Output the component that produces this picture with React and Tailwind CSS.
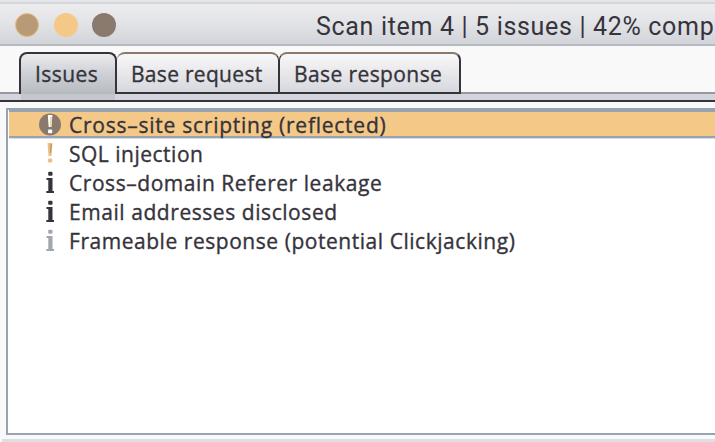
const ISSUES = [
  { icon: 'high', name: 'Cross–site scripting (reflected)', tracking: 'tracking-[0.75px]', selected: true },
  { icon: 'medium', name: 'SQL injection', tracking: 'tracking-[0.5px]' },
  { icon: 'info', name: 'Cross–domain Referer leakage', tracking: 'tracking-[0.55px]' },
  { icon: 'info', name: 'Email addresses disclosed', tracking: 'tracking-[0.56px]' },
  { icon: 'faint', name: 'Frameable response (potential Clickjacking)', tracking: 'tracking-[0.54px]' },
];

function InfoGlyph({ color }) {
  return (
    <svg width="24" height="24" viewBox="0 0 24 24" fill={color}>
      <rect x="10.200" y="1.800" width="4.300" height="4" rx="1" />
      <path d="M8.500 8h6v13h1.500v2H8.300v-2h2V10H8.500z" />
    </svg>
  );
}

function SeverityIcon({ kind }) {
  if (kind === 'high') {
    return (
      <svg width="24" height="24" viewBox="0 0 24 24">
        <circle cx="12" cy="12.500" r="11" fill="#8a7a6d" />
        <path d="M9.800 3h4.600l-.9 12h-2.800z" fill="#fff" />
        <path d="M12.200 5h1.600l-.6 10h-1z" fill="#f4c987" />
        <rect x="10" y="17.500" width="4.200" height="3.800" rx="1" fill="#fff" />
      </svg>
    );
  }
  if (kind === 'medium') {
    return (
      <svg width="24" height="24" viewBox="0 0 24 24" fill="#eebf7e">
        <path d="M9.500 2h5l-1 13h-3z" />
        <path d="M12.500 3h1.400l-1.100 9h-.8z" fill="#a9927a" />
        <rect x="9.800" y="17.500" width="4.600" height="4" rx="1.500" />
      </svg>
    );
  }
  return <InfoGlyph color={kind === 'info' ? '#36333b' : '#a2a7af'} />;
}

function IssueRow({ issue }) {
  return (
    <div
      className={
        'ml-px flex items-center pl-[29px] ' +
        (issue.selected
          ? 'h-[28px] border-b-2 border-[#98a3b1] bg-[#f4c987] shadow-[inset_0_2px_#98a3b1,0_1px_#d9dde3]'
          : 'h-[29px]')
      }
    >
      <span className="mr-[7px] flex w-6 shrink-0 pt-px">
        <SeverityIcon kind={issue.icon} />
      </span>
      <span className={'whitespace-pre pt-[4px] ' + issue.tracking}>{issue.name}</span>
    </div>
  );
}

function Tab({ label, width, active, last, tracking }) {
  return (
    <div
      className={
        'flex h-[42px] shrink-0 items-center rounded-t-[8px] border-t-2 pl-[14px] ' +
        width + ' ' +
        (active
          ? 'border-x-2 border-[#36333b] bg-linear-to-b from-[#ebebed] via-[#cdd0d6] to-[#b7babd]'
          : 'border-b-2 border-[#36333b] border-t-[#8a7a6d] bg-linear-to-b from-[#f8f8f8] via-[#e8e8eb] to-[#d6d8de] ' +
            (last ? 'border-l border-r-2' : 'border-r'))
      }
    >
      <span className={'whitespace-pre ' + (active ? '' : 'pt-[2px] ') + tracking}>{label}</span>
    </div>
  );
}

export default function App() {
  return (
    <div className="flex h-[442px] w-[715px] flex-col overflow-hidden bg-[#f9f9f9] font-['Open_Sans','Noto_Sans',sans-serif] text-[21px] leading-none text-[#36333b] [-webkit-text-stroke:0.35px]">
      <header className="flex h-[46px] shrink-0 items-center border-b-2 border-[#b7babf] bg-linear-to-b from-[#efeff0] via-[#e3e4e7] to-[#d1d4da] pl-[15px] shadow-[inset_0_2px_#e6e6e9,inset_0_4px_#d3d7de]">
        <div className="flex gap-[14.500px] pt-[5px]">
          <span className="size-6 rounded-full border border-[#e8bd80] bg-[#b89a76]" />
          <span className="size-6 rounded-full bg-[#f4c987]" />
          <span className="size-6 rounded-full bg-[#8a7a6d]" />
        </div>
        <h1 className="ml-[200px] whitespace-pre pt-[8px] font-['Roboto',sans-serif] text-[25px] font-normal tracking-[0.67px] [-webkit-text-stroke:0px]">
          Scan item 4 | 5 issues | 42% comp
        </h1>
      </header>
      <nav className="flex h-[48px] shrink-0 items-end">
        <div className="h-[2px] w-[19px] bg-[#98999e]" />
        <Tab label="Issues" width="w-[98px]" active tracking="tracking-[0.45px]" />
        <Tab label="Base request" width="w-[162px]" tracking="tracking-[0.3px]" />
        <Tab label="Base response" width="w-[182px]" last tracking="tracking-[0.4px]" />
        <div className="h-[2px] grow bg-[#98999e]" />
      </nav>
      <div className="flex h-[8px] shrink-0 border-b-2 border-[#36333b] bg-[#d2d5dc]">
        <div className="ml-[21px] w-[94px] bg-[#c3c6cb]" />
      </div>
      <main className="ml-[6px] mt-[6px] flex h-[327px] flex-col border-y-2 border-l-2 border-[#98a3b1] bg-white">
        {ISSUES.map((issue) => (
          <IssueRow key={issue.name} issue={issue} />
        ))}
      </main>
      <footer className="ml-[2px] mt-[4px] h-[3px] shrink-0 bg-[#dfdfe3]" />
    </div>
  );
}
